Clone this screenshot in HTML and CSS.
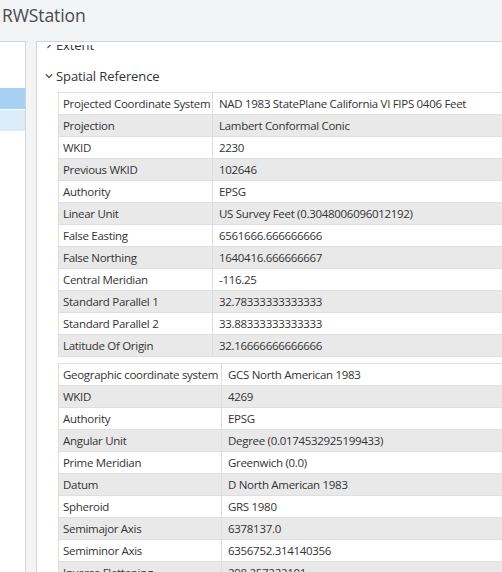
FILE: index.html
```html
<!DOCTYPE html>
<html lang="en">
<head>
<meta charset="utf-8">
<title>RWStation</title>
<link rel="stylesheet" href="styles.css">
</head>
<body>
<div class="app">
  <header class="titlebar">RWStation</header>
  <div class="workspace">
    <nav class="sidebar">
      <div class="nav-item selected"></div>
      <div class="nav-item hovered"></div>
    </nav>
    <main class="details">
      <div class="details-viewport">
        <div class="details-scroll">
          <section class="group">
            <div class="group-head">
              <svg class="chevron" width="8" height="8" viewBox="0 0 8 8"><path d="M2.5 1 L5.5 4 L2.5 7" fill="none" stroke="#555" stroke-width="1.2"/></svg>
              <span>Extent</span>
            </div>
          </section>
          <section class="group">
            <div class="group-head">
              <svg class="chevron" width="8" height="8" viewBox="0 0 8 8"><path d="M0.8 2.3 L4 5.5 L7.2 2.3" fill="none" stroke="#555" stroke-width="1.3"/></svg>
              <span>Spatial Reference</span>
            </div>
            <table class="props projected">
              <colgroup><col class="key"><col></colgroup>
              <tr><td class="label">Projected Coordinate System</td><td>NAD 1983 StatePlane California VI FIPS 0406 Feet</td></tr>
              <tr><td class="label">Projection</td><td>Lambert Conformal Conic</td></tr>
              <tr><td class="label">WKID</td><td>2230</td></tr>
              <tr><td class="label">Previous WKID</td><td>102646</td></tr>
              <tr><td class="label">Authority</td><td>EPSG</td></tr>
              <tr><td class="label">Linear Unit</td><td>US Survey Feet (0.3048006096012192)</td></tr>
              <tr><td class="label">False Easting</td><td>6561666.666666666</td></tr>
              <tr><td class="label">False Northing</td><td>1640416.666666667</td></tr>
              <tr><td class="label">Central Meridian</td><td>-116.25</td></tr>
              <tr><td class="label">Standard Parallel 1</td><td>32.78333333333333</td></tr>
              <tr><td class="label">Standard Parallel 2</td><td>33.88333333333333</td></tr>
              <tr><td class="label">Latitude Of Origin</td><td>32.16666666666666</td></tr>
            </table>
            <table class="props geographic">
              <colgroup><col class="key"><col></colgroup>
              <tr><td class="label">Geographic coordinate system</td><td>GCS North American 1983</td></tr>
              <tr><td class="label">WKID</td><td>4269</td></tr>
              <tr><td class="label">Authority</td><td>EPSG</td></tr>
              <tr><td class="label">Angular Unit</td><td>Degree (0.0174532925199433)</td></tr>
              <tr><td class="label">Prime Meridian</td><td>Greenwich (0.0)</td></tr>
              <tr><td class="label">Datum</td><td>D North American 1983</td></tr>
              <tr><td class="label">Spheroid</td><td>GRS 1980</td></tr>
              <tr><td class="label">Semimajor Axis</td><td>6378137.0</td></tr>
              <tr><td class="label">Semiminor Axis</td><td>6356752.314140356</td></tr>
              <tr><td class="label">Inverse Flattening</td><td>298.257222101</td></tr>
            </table>
          </section>
        </div>
      </div>
    </main>
  </div>
</div>
</body>
</html>
```

FILE: styles.css
```css
html, body {
  margin: 0;
  padding: 0;
}

body {
  background: #f3f4f5;
  font-family: "Open Sans", "Noto Sans", sans-serif;
  color: #333;
}

.app {
  height: 572px;
  display: flex;
  flex-direction: column;
  overflow: hidden;
}

/* window title */
.titlebar {
  height: 41px;
  box-sizing: border-box;
  padding: 3px 0 0 2px;
  font-size: 17.5px;
  line-height: 24px;
  color: #4a4a4a;
  letter-spacing: -0.1px;
}

.workspace {
  flex: 1;
  min-height: 0;
  display: flex;
}

/* left navigation list */
.sidebar {
  width: 25px;
  flex: none;
  background: #fff;
  border-top: 1px solid #d4d4d4;
  border-right: 1px solid #d4d4d4;
  padding-top: 46px;
}

.nav-item {
  height: 21px;
  margin-bottom: 1px;
}

.nav-item.selected {
  background: #a6d1f2;
}

.nav-item.hovered {
  background: #dcecf9;
}

/* property panel */
.details {
  flex: 1;
  min-width: 0;
  margin-left: 10px;
  padding-top: 3px;
  display: flex;
  flex-direction: column;
  background: #fff;
  border-top: 1px solid #d4d4d4;
  border-left: 1px solid #d4d4d4;
}

.details-viewport {
  flex: 1;
  min-height: 0;
  overflow: hidden;
}

.details-scroll {
  margin-top: -10px;
}

.group + .group {
  margin-top: 11px;
}

.group-head {
  display: flex;
  align-items: center;
  height: 20px;
  padding-left: 8px;
  font-size: 13px;
  letter-spacing: -0.1px;
  color: #333;
}

.chevron {
  flex: none;
  margin-right: 3px;
}

.props {
  border-collapse: collapse;
  table-layout: fixed;
  width: 480px;
  margin: 6px 0 0 21px;
  border: 1px solid #cdcdcd;
  font-size: 11.5px;
  letter-spacing: -0.3px;
}

.projected col.key {
  width: 154px;
}

.geographic col.key {
  width: 163px;
}

.props td {
  height: 22px;
  box-sizing: border-box;
  padding: 0 6px;
  border: 1px solid #dedede;
  white-space: nowrap;
  overflow: hidden;
  line-height: 20px;
}

.props td.label {
  padding-left: 4px;
}

.props tr:nth-child(even) td {
  background: #e9e9e9;
}
```
